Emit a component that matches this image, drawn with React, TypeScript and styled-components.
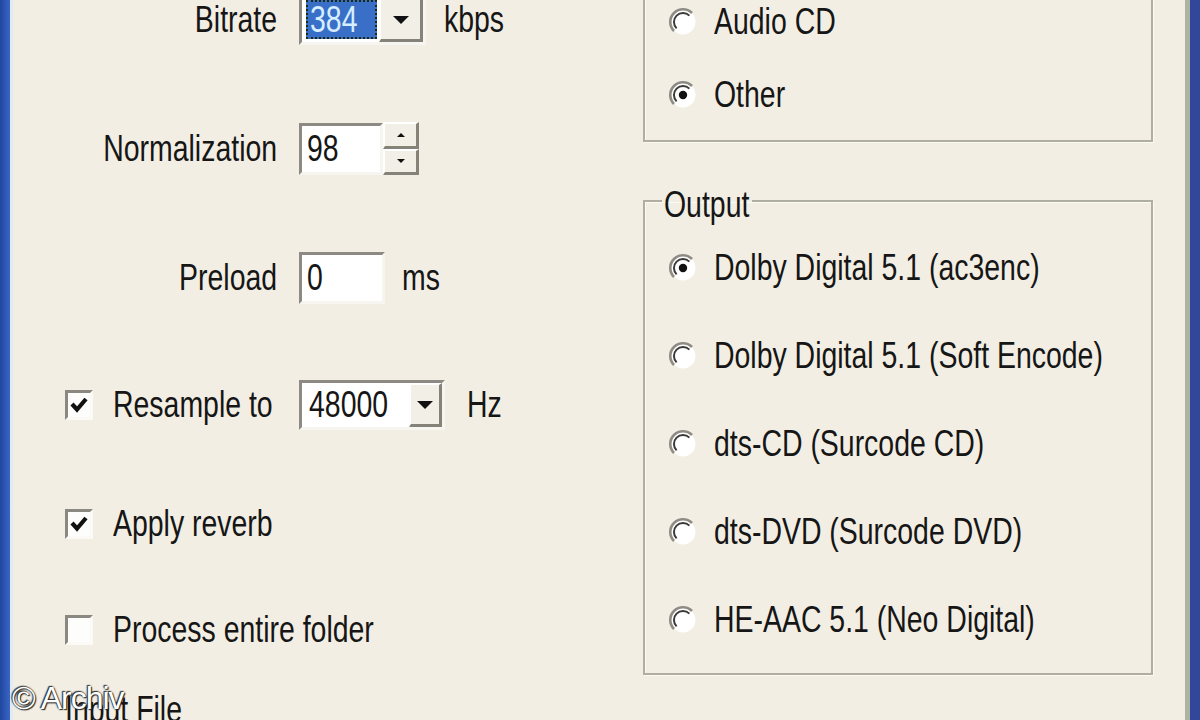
import styled, { createGlobalStyle, css } from "styled-components";

const GlobalStyle = createGlobalStyle`
  html, body {
    margin: 0;
    padding: 0;
    background: #f3eee4;
  }
`;

const Window = styled.div`
  position: relative;
  display: flex;
  width: 1200px;
  height: 720px;
  overflow: hidden;
  background: #f3eee4;
  color: #161616;
  font-family: "Liberation Sans", Arial, sans-serif;
  font-size: 36px;
  line-height: 40px;
`;

const LeftFrame = styled.div`
  flex: none;
  width: 10px;
  background: linear-gradient(to right, #1f47a0, #3a66c4);
  border-right: 3px solid #e2eaf4;
`;

const RightFrame = styled.div`
  flex: none;
  width: 10px;
  background: #33479a;
  border-left: 5px solid #aeb4a4;
`;

const Body = styled.div`
  flex: 1;
  display: flex;
  min-width: 0;
`;

const LeftColumn = styled.div`
  width: 630px;
  flex: none;
  display: flex;
  flex-direction: column;
  margin-top: -5px;
`;

const RightColumn = styled.div`
  width: 510px;
  flex: none;
  display: flex;
  flex-direction: column;
`;

/* the dialog font is a narrow bitmap face, so the text is squeezed sideways */
const Text = styled.span<{ $origin?: string; $shift?: number }>`
  display: inline-block;
  white-space: nowrap;
  transform: translateY(${(p) => p.$shift ?? 0}px) scaleX(0.79);
  transform-origin: ${(p) => p.$origin ?? "left"} center;
`;

const Label = styled(Text)`
  justify-self: end;
`;

const FieldRow = styled.div<{ $gap: number; $h?: number }>`
  display: grid;
  grid-template-columns: 264px auto;
  column-gap: 22px;
  align-items: center;
  height: ${(p) => p.$h ?? 52}px;
  margin-top: ${(p) => p.$gap}px;
`;

const Controls = styled.div<{ $gap: number }>`
  display: flex;
  align-items: center;
  gap: ${(p) => p.$gap}px;
`;

const CheckRow = styled.label<{ $gap: number }>`
  display: flex;
  align-items: center;
  gap: 20px;
  height: 52px;
  padding-left: 52px;
  margin-top: ${(p) => p.$gap}px;
  white-space: nowrap;
`;

const sunken = css`
  box-sizing: border-box;
  background: #ffffff;
  border-style: solid;
  border-width: 3px;
  border-color: #8c8a82 #f7f5ef #f7f5ef #8c8a82;
`;

const raised = css`
  box-sizing: border-box;
  background: #f2efe7;
  border-style: solid;
  border-width: 2px 3px 3px 2px;
  border-color: #ffffff #858379 #858379 #ffffff;
  display: flex;
  align-items: center;
  justify-content: center;
`;

const EditBox = styled.div<{ $w: number }>`
  ${sunken}
  width: ${(p) => p.$w}px;
  height: 52px;
  display: flex;
  align-items: center;
  padding-left: 5px;
`;

const Combo = styled.div<{ $w: number }>`
  ${sunken}
  flex: none;
  width: ${(p) => p.$w}px;
  height: 50px;
  display: flex;
  align-items: stretch;
`;

const ComboValue = styled.div<{ $selected?: boolean }>`
  flex: 1;
  display: flex;
  align-items: center;
  padding-left: 7px;
  ${(p) =>
    p.$selected &&
    css`
      margin: 2px 2px 3px 4px;
      padding-left: 4px;
      background: #3a6fc8;
      color: #d6eeff;
      outline: 2px dotted #1b2a10;
      outline-offset: -2px;
    `}
`;

const DropButton = styled.div`
  ${raised}
  width: 44px;
  &::after {
    content: "";
    border-left: 8px solid transparent;
    border-right: 8px solid transparent;
    border-top: 8px solid #111;
  }
`;

const Spinner = styled.div`
  display: flex;
  flex-direction: column;
  height: 53px;
`;

const SpinButton = styled.div<{ $up?: boolean }>`
  ${raised}
  width: 36px;
  flex: 1;
  &::after {
    content: "";
    border-left: 4px solid transparent;
    border-right: 4px solid transparent;
    ${(p) => (p.$up ? "border-bottom: 4px solid #111;" : "border-top: 4px solid #111;")}
  }
`;

const CheckBox = styled.span`
  box-sizing: border-box;
  flex: none;
  width: 28px;
  height: 30px;
  border-style: solid;
  border-width: 3px;
  border-color: #8a8880 #fbfaf6 #fbfaf6 #8a8880;
  background: #fdfdfb;
  display: flex;
  align-items: center;
  justify-content: center;
`;

const GroupBox = styled.fieldset<{ $top: number; $padTop: number; $padBottom: number }>`
  box-sizing: border-box;
  width: 510px;
  min-width: 0;
  margin: ${(p) => p.$top}px 0 0 0;
  padding: ${(p) => p.$padTop}px 0 ${(p) => p.$padBottom}px 23px;
  border: 2px solid #b0ada1;
  box-shadow: inset 1px 1px 0 #fbfaf5, 1px 1px 0 #fbfaf5;
  display: flex;
  flex-direction: column;
`;

const Legend = styled.legend`
  margin-left: -6px;
  padding: 0 2px;
  line-height: 36px;
  width: 86px;
`;

const RadioRow = styled.label<{ $gap: number }>`
  display: flex;
  align-items: center;
  gap: 16px;
  height: 52px;
  margin-top: ${(p) => p.$gap}px;
  white-space: nowrap;
`;

const RadioDot = styled.svg`
  flex: none;
  width: 30px;
  height: 30px;
`;

const Watermark = styled.div`
  position: absolute;
  left: 12px;
  bottom: 2px;
  font-family: "Liberation Sans", Arial, sans-serif;
  font-size: 32px;
  letter-spacing: -1px;
  color: #ffffff;
  text-shadow: 0 0 2px #222, 1px 1px 1px #222, -1px -1px 1px #333;
`;

function Radio({ checked }: { checked?: boolean }) {
  return (
    <RadioDot viewBox="0 0 30 30">
      <circle cx="15" cy="15" r="12.5" fill="#ffffff" />
      <path d="M24 6 A12.7 12.7 0 0 0 6 24" stroke="#8d8b84" strokeWidth="2.6" fill="none" />
      <path d="M21.4 8.6 A9 9 0 0 0 8.6 21.4" stroke="#3a3a38" strokeWidth="2" fill="none" />
      {checked && <circle cx="15" cy="15" r="4.2" fill="#111" />}
    </RadioDot>
  );
}

function Check({ checked }: { checked?: boolean }) {
  return (
    <CheckBox>
      {checked && (
        <svg width="20" height="20" viewBox="0 0 20 20">
          <path d="M3 9 L8 14.5 L17 4" stroke="#111" strokeWidth="4.2" fill="none" />
        </svg>
      )}
    </CheckBox>
  );
}

const outputs = [
  { label: "Dolby Digital 5.1 (ac3enc)", checked: true },
  { label: "Dolby Digital 5.1 (Soft Encode)" },
  { label: "dts-CD (Surcode CD)" },
  { label: "dts-DVD (Surcode DVD)" },
  { label: "HE-AAC 5.1 (Neo Digital)" },
];

export default function App() {
  return (
    <>
      <GlobalStyle />
      <Window>
        <LeftFrame />
        <Body>
          <LeftColumn>
            <FieldRow $gap={0} $h={50}>
              <Label $origin="right">Bitrate</Label>
              <Controls $gap={18}>
                <Combo $w={127}>
                  <ComboValue $selected>
                    <Text>384</Text>
                  </ComboValue>
                  <DropButton />
                </Combo>
                <Text>kbps</Text>
              </Controls>
            </FieldRow>

            <FieldRow $gap={77}>
              <Label $origin="right">Normalization</Label>
              <Controls $gap={0}>
                <EditBox $w={84}>
                  <Text>98</Text>
                </EditBox>
                <Spinner>
                  <SpinButton $up />
                  <SpinButton />
                </Spinner>
              </Controls>
            </FieldRow>

            <FieldRow $gap={78}>
              <Label $origin="right">Preload</Label>
              <Controls $gap={17}>
                <EditBox $w={86}>
                  <Text>0</Text>
                </EditBox>
                <Text>ms</Text>
              </Controls>
            </FieldRow>

            <FieldRow $gap={75}>
              <CheckRow $gap={0}>
                <Check checked />
                <Text>Resample to</Text>
              </CheckRow>
              <Controls $gap={22}>
                <Combo $w={146}>
                  <ComboValue>
                    <Text>48000</Text>
                  </ComboValue>
                  <DropButton />
                </Combo>
                <Text>Hz</Text>
              </Controls>
            </FieldRow>

            <CheckRow $gap={73}>
              <Check checked />
              <Text>Apply reverb</Text>
            </CheckRow>

            <CheckRow $gap={66}>
              <Check />
              <Text>Process entire folder</Text>
            </CheckRow>

            <CheckRow $gap={40}>
              <Text>Input File</Text>
            </CheckRow>
          </LeftColumn>

          <RightColumn>
            <GroupBox $top={-60} $padTop={54} $padBottom={19}>
              <RadioRow $gap={0}>
                <Radio />
                <Text>Audio CD</Text>
              </RadioRow>
              <RadioRow $gap={21}>
                <Radio checked />
                <Text>Other</Text>
              </RadioRow>
            </GroupBox>

            <GroupBox $top={41} $padTop={23} $padBottom={27}>
              <Legend>
                <Text $shift={4}>Output</Text>
              </Legend>
              {outputs.map((o, i) => (
                <RadioRow key={o.label} $gap={i === 0 ? 0 : 36}>
                  <Radio checked={o.checked} />
                  <Text>{o.label}</Text>
                </RadioRow>
              ))}
            </GroupBox>
          </RightColumn>
        </Body>
        <RightFrame />
        <Watermark>© Archiv</Watermark>
      </Window>
    </>
  );
}
